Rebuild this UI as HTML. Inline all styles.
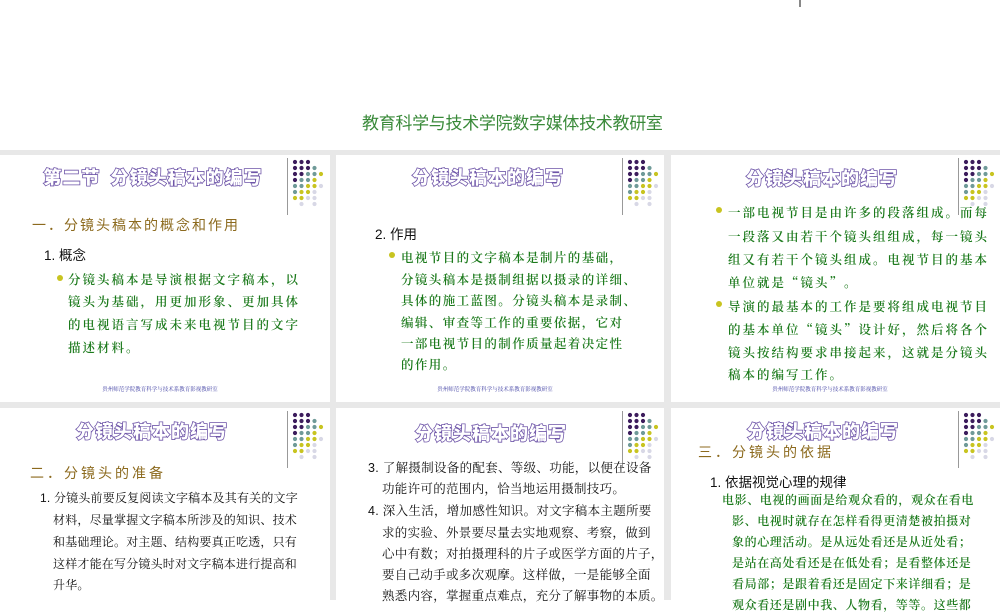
<!DOCTYPE html>
<html><head><meta charset="utf-8"><style>
*{margin:0;padding:0;box-sizing:border-box}
body{width:1000px;height:600px;overflow:hidden;background:#fff;position:relative;font-family:"Liberation Sans","Noto Sans CJK SC",sans-serif}
.bg{position:absolute;left:0;top:150px;width:1000px;height:450px;background:#e8e8e8}
.p{position:absolute;background:#fff}
.t{position:absolute;white-space:nowrap}
.title{position:absolute;white-space:nowrap;font-family:"Noto Sans CJK SC",sans-serif;font-weight:900;font-size:18px;color:#fff;-webkit-text-stroke:1.6px #6e55a8;paint-order:stroke fill;letter-spacing:1px;transform:translateX(-50%)}
.h{position:absolute;white-space:nowrap;font-family:"Noto Sans CJK SC",sans-serif;font-size:14px;color:#8c6a1e;letter-spacing:2px}
.g{position:absolute;white-space:nowrap;font-family:"Noto Serif CJK SC",serif;font-size:12.5px;color:#1c7a1c;font-weight:600}
.k{position:absolute;white-space:nowrap;font-family:"Liberation Sans","Noto Serif CJK SC",serif;font-size:12.5px;color:#111}
.n{position:absolute;white-space:nowrap;font-family:"Liberation Sans","Noto Sans CJK SC",sans-serif;font-size:13.5px;color:#111}
.b{position:absolute;width:6px;height:6px;border-radius:50%;background:#c8c420}
.f{position:absolute;white-space:nowrap;font-family:"Noto Serif CJK SC",serif;font-size:5.5px;color:#3a3aa0;transform:translateX(-50%)}
.d{position:absolute}
</style></head><body>
<div style="position:absolute;left:799px;top:0;width:2px;height:7px;background:#888"></div>
<div class="t" style="left:362px;top:109px;font-size:17px;color:#3a8a3a;letter-spacing:-0.3px;font-family:'Noto Sans CJK SC',sans-serif">教育科学与技术学院数字媒体技术教研室</div>
<div class="bg"></div>

<svg width="0" height="0" style="position:absolute"><defs>
<g id="dots">
<line x1="0.5" y1="0" x2="0.5" y2="57" stroke="#999" stroke-width="1"/>
<g fill="#3c1c5c"><circle cx="8" cy="4" r="2.1"/><circle cx="14.5" cy="4" r="2.1"/><circle cx="21" cy="4" r="2.1"/>
<circle cx="8" cy="10" r="2.1"/><circle cx="14.5" cy="10" r="2.1"/><circle cx="21" cy="10" r="2.1"/>
<circle cx="8" cy="16" r="2.1"/><circle cx="14.5" cy="16" r="2.1"/><circle cx="8" cy="22" r="2.1"/></g>
<g fill="#6f9a98"><circle cx="27.5" cy="10" r="2.1"/><circle cx="21" cy="16" r="2.1"/><circle cx="27.5" cy="16" r="2.1"/>
<circle cx="14.5" cy="22" r="2.1"/><circle cx="21" cy="22" r="2.1"/><circle cx="8" cy="28" r="2.1"/><circle cx="14.5" cy="28" r="2.1"/><circle cx="8" cy="34" r="2.1"/></g>
<g fill="#c8c420"><circle cx="34" cy="16" r="2.1"/><circle cx="27.5" cy="22" r="2.1"/><circle cx="21" cy="28" r="2.1"/><circle cx="27.5" cy="28" r="2.1"/>
<circle cx="14.5" cy="34" r="2.1"/><circle cx="21" cy="34" r="2.1"/><circle cx="8" cy="40" r="2.1"/><circle cx="14.5" cy="40" r="2.1"/></g>
<g fill="#d8d8e6"><circle cx="34" cy="28" r="2.1"/><circle cx="27.5" cy="34" r="2.1"/><circle cx="21" cy="40" r="2.1"/><circle cx="27.5" cy="40" r="2.1"/>
<circle cx="14.5" cy="46" r="2.1"/><circle cx="27.5" cy="46" r="2.1"/></g>
</g></defs></svg>

<!-- Panel 1 -->
<div class="p" style="left:0;top:155px;width:330px;height:247px"></div>
<div class="title" style="left:153px;top:164px">第二节&nbsp;&nbsp;分镜头稿本的编写</div>
<svg class="d" style="left:287px;top:158px" width="40" height="60"><use href="#dots"/></svg>
<div class="h" style="left:32px;top:215px">一．分镜头稿本的概念和作用</div>
<div class="n" style="left:44px;top:244px">1. 概念</div>
<div class="b" style="left:57px;top:275px"></div>
<div class="g" style="left:68px;top:270px;letter-spacing:2px">分镜头稿本是导演根据文字稿本，以</div>
<div class="g" style="left:68px;top:292px;letter-spacing:2px">镜头为基础，用更加形象、更加具体</div>
<div class="g" style="left:68px;top:315px;letter-spacing:2px">的电视语言写成未来电视节目的文字</div>
<div class="g" style="left:68px;top:338px;letter-spacing:2px">描述材料。</div>
<div class="f" style="left:160px;top:385px">贵州师范学院教育科学与技术系教育影视教研室</div>

<!-- Panel 2 -->
<div class="p" style="left:336px;top:155px;width:328px;height:247px"></div>
<div class="title" style="left:488px;top:164px">分镜头稿本的编写</div>
<svg class="d" style="left:622px;top:158px" width="40" height="60"><use href="#dots"/></svg>
<div class="n" style="left:375px;top:223px">2. 作用</div>
<div class="b" style="left:389px;top:252px"></div>
<div class="g" style="left:401px;top:248px;letter-spacing:1.4px">电视节目的文字稿本是制片的基础，</div>
<div class="g" style="left:401px;top:270px;letter-spacing:1.4px">分镜头稿本是摄制组据以摄录的详细、</div>
<div class="g" style="left:401px;top:291px;letter-spacing:1.4px">具体的施工蓝图。分镜头稿本是录制、</div>
<div class="g" style="left:401px;top:313px;letter-spacing:1.4px">编辑、审查等工作的重要依据，它对</div>
<div class="g" style="left:401px;top:334px;letter-spacing:1.4px">一部电视节目的制作质量起着决定性</div>
<div class="g" style="left:401px;top:355px;letter-spacing:1.4px">的作用。</div>
<div class="f" style="left:495px;top:385px">贵州师范学院教育科学与技术系教育影视教研室</div>

<!-- Panel 3 -->
<div class="p" style="left:671px;top:155px;width:329px;height:247px"></div>
<div class="title" style="left:822px;top:165px">分镜头稿本的编写</div>
<svg class="d" style="left:958px;top:158px" width="40" height="60"><use href="#dots"/></svg>
<div class="b" style="left:716px;top:207px"></div>
<div class="g" style="left:728px;top:203px;letter-spacing:2px">一部电视节目是由许多的段落组成。而每</div>
<div class="g" style="left:728px;top:227px;letter-spacing:2px">一段落又由若干个镜头组组成，每一镜头</div>
<div class="g" style="left:728px;top:250px;letter-spacing:2px">组又有若干个镜头组成。电视节目的基本</div>
<div class="g" style="left:728px;top:273px;letter-spacing:2px">单位就是“镜头”。</div>
<div class="b" style="left:716px;top:301px"></div>
<div class="g" style="left:728px;top:297px;letter-spacing:2px">导演的最基本的工作是要将组成电视节目</div>
<div class="g" style="left:728px;top:320px;letter-spacing:2px">的基本单位“镜头”设计好，然后将各个</div>
<div class="g" style="left:728px;top:343px;letter-spacing:2px">镜头按结构要求串接起来，这就是分镜头</div>
<div class="g" style="left:728px;top:365px;letter-spacing:2px">稿本的编写工作。</div>
<div class="f" style="left:830px;top:385px">贵州师范学院教育科学与技术系教育影视教研室</div>

<!-- Row 2 Panel 1 -->
<div class="p" style="left:0;top:408px;width:330px;height:192px"></div>
<div class="title" style="left:152px;top:418px">分镜头稿本的编写</div>
<svg class="d" style="left:287px;top:411px" width="40" height="60"><use href="#dots"/></svg>
<div class="h" style="left:30px;top:463px;letter-spacing:3px">二．分镜头的准备</div>
<div class="k" style="left:40px;top:489px;font-size:12px;letter-spacing:0.2px">1. 分镜头前要反复阅读文字稿本及其有关的文字</div>
<div class="k" style="left:53px;top:511px;font-size:12px;letter-spacing:0.2px">材料，尽量掌握文字稿本所涉及的知识、技术</div>
<div class="k" style="left:53px;top:533px;font-size:12px;letter-spacing:0.2px">和基础理论。对主题、结构要真正吃透，只有</div>
<div class="k" style="left:53px;top:555px;font-size:12px;letter-spacing:0.2px">这样才能在写分镜头时对文字稿本进行提高和</div>
<div class="k" style="left:53px;top:576px;font-size:12px;letter-spacing:0.2px">升华。</div>

<!-- Row 2 Panel 2 -->
<div class="p" style="left:336px;top:408px;width:328px;height:192px"></div>
<div class="title" style="left:491px;top:420px">分镜头稿本的编写</div>
<svg class="d" style="left:622px;top:411px" width="40" height="60"><use href="#dots"/></svg>
<div class="k" style="left:368px;top:458px;letter-spacing:0.3px">3. 了解摄制设备的配套、等级、功能，以便在设备</div>
<div class="k" style="left:382px;top:479px;letter-spacing:0.3px">功能许可的范围内，恰当地运用摄制技巧。</div>
<div class="k" style="left:368px;top:501px;letter-spacing:0.3px">4. 深入生活，增加感性知识。对文字稿本主题所要</div>
<div class="k" style="left:382px;top:523px;letter-spacing:0.3px">求的实验、外景要尽量去实地观察、考察，做到</div>
<div class="k" style="left:382px;top:544px;letter-spacing:0.3px">心中有数；对拍摄理科的片子或医学方面的片子，</div>
<div class="k" style="left:382px;top:565px;letter-spacing:0.3px">要自己动手或多次观摩。这样做，一是能够全面</div>
<div class="k" style="left:382px;top:586px;letter-spacing:0.3px">熟悉内容，掌握重点难点，充分了解事物的本质。</div>

<!-- Row 2 Panel 3 -->
<div class="p" style="left:671px;top:408px;width:329px;height:192px"></div>
<div class="title" style="left:823px;top:418px">分镜头稿本的编写</div>
<svg class="d" style="left:958px;top:411px" width="40" height="60"><use href="#dots"/></svg>
<div class="h" style="left:698px;top:442px;letter-spacing:3px">三．分镜头的依据</div>
<div class="n" style="left:710px;top:471px">1. 依据视觉心理的规律</div>
<div class="g" style="left:722px;top:491px;letter-spacing:0.6px;font-size:12px">电影、电视的画面是给观众看的，观众在看电</div>
<div class="g" style="left:732px;top:512px;letter-spacing:0.6px;font-size:12px">影、电视时就存在怎样看得更清楚被拍摄对</div>
<div class="g" style="left:732px;top:533px;letter-spacing:0.6px;font-size:12px">象的心理活动。是从远处看还是从近处看；</div>
<div class="g" style="left:732px;top:554px;letter-spacing:0.6px;font-size:12px">是站在高处看还是在低处看；是看整体还是</div>
<div class="g" style="left:732px;top:575px;letter-spacing:0.6px;font-size:12px">看局部；是跟着看还是固定下来详细看；是</div>
<div class="g" style="left:732px;top:596px;letter-spacing:0.6px;font-size:12px">观众看还是剧中我、人物看，等等。这些都</div>
</body></html>
